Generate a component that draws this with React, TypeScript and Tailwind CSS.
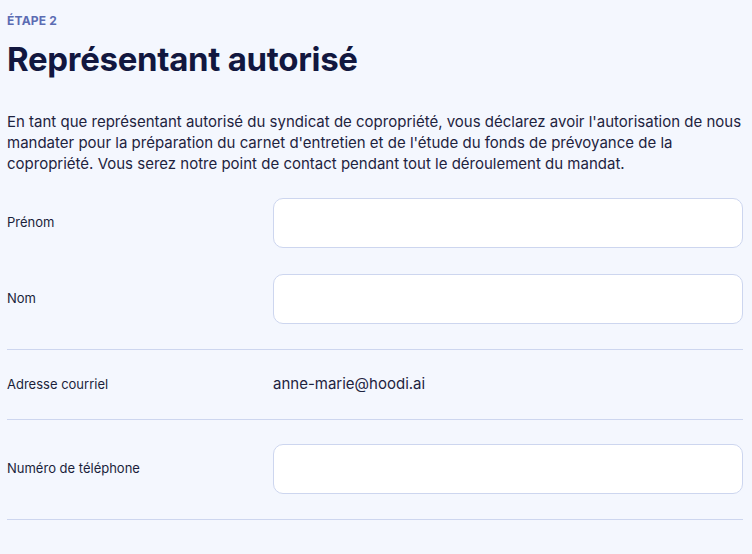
// Étape 2 — représentant autorisé
const font = { fontFamily: 'Inter, "Noto Sans", sans-serif' }

function Field({ label, top = 'pt-[24px]', bottom = 'pb-[25px]' }: { label: string; top?: string; bottom?: string }) {
  return (
    <div className={`flex items-center ${top} ${bottom}`}>
      <div className="w-[266px] shrink-0 text-[13px] text-[#1b1f3b]">{label}</div>
      <input className="h-[50px] flex-1 rounded-[10px] border border-[#cdd6ef] bg-white px-3 text-[15px] outline-none" />
    </div>
  )
}

export default function App() {
  return (
    <div className="min-h-[554px] bg-[#f4f7fe] pl-[7px] pr-[9px] pt-[12px]" style={font}>
      <div className="text-[12px] font-bold tracking-[0.2px] text-[#5b6cb3]">ÉTAPE 2</div>
      <h1 className="mt-[9px] text-[33px] font-bold leading-[40px] tracking-[-0.3px] text-[#12173f]">Représentant autorisé</h1>
      <p className="mt-[32px] text-[15px] leading-[21px] text-[#1e2340]">
        En tant que représentant autorisé du syndicat de copropriété, vous déclarez avoir l'autorisation de nous mandater pour la préparation du carnet d'entretien et de l'étude du fonds de prévoyance de la copropriété. Vous serez notre point de contact pendant tout le déroulement du mandat.
      </p>
      <div>
        <Field label="Prénom" top="pt-[24px]" bottom="pb-0" />
        <Field label="Nom" top="pt-[26px]" bottom="pb-[25px]" />
        <div className="border-t border-[#cdd6ef]" />
        <div className="flex h-[69px] items-center">
          <div className="w-[266px] shrink-0 text-[13px] text-[#1b1f3b]">Adresse courriel</div>
          <div className="text-[15px] text-[#1e2340]">anne-marie@hoodi.ai</div>
        </div>
        <div className="border-t border-[#cdd6ef]" />
        <Field label="Numéro de téléphone" />
        <div className="border-t border-[#cdd6ef]" />
      </div>
    </div>
  )
}
